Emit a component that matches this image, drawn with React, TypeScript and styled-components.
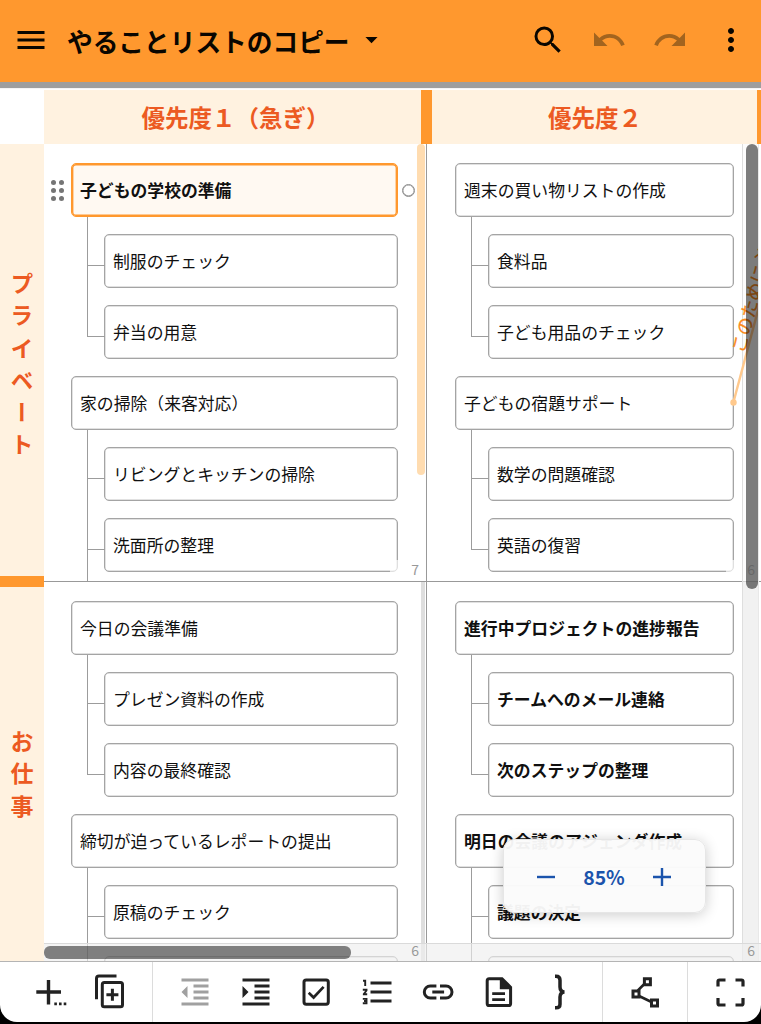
import React from "react";
import styled, { createGlobalStyle, css } from "styled-components";
import {
  MdMenu,
  MdArrowDropDown,
  MdSearch,
  MdUndo,
  MdRedo,
  MdMoreVert,
  MdFormatIndentDecrease,
  MdFormatIndentIncrease,
} from "react-icons/md";

const GlobalStyle = createGlobalStyle`
  * { box-sizing: border-box; }
  body {
    margin: 0;
    background: #000;
    font-family: "Noto Sans CJK JP", "Noto Sans", sans-serif;
  }
`;

const Screen = styled.div`
  width: 761px;
  height: 1024px;
  display: flex;
  flex-direction: column;
  overflow: hidden;
  background: #000;
`;

const AppBar = styled.header`
  flex: none;
  height: 82px;
  display: flex;
  align-items: center;
  padding: 0 12px 0 12.5px;
  background: #ff982e;
  color: #0a0600;
`;

const BarButton = styled.button<{ $gap?: number; $dim?: boolean; $size?: number }>`
  flex: none;
  width: ${(p) => p.$size ?? 36}px;
  height: ${(p) => p.$size ?? 36}px;
  margin: -3px 0 0 ${(p) => p.$gap ?? 0}px;
  padding: 0;
  border: 0;
  background: none;
  color: ${(p) => (p.$dim ? "#a2641f" : "#0a0600")};
  svg {
    display: block;
    width: 100%;
    height: 100%;
  }
`;

const Title = styled.h1`
  margin: 0 0 0 18.5px;
  flex: none;
  width: 289.5px;
  font-size: 25.7px;
  line-height: 36px;
  font-weight: 700;
  white-space: nowrap;
`;

const Spacer = styled.div`
  flex: 1;
`;

const Strip = styled.div`
  flex: none;
  height: 8px;
  border-top: 6px solid #9e9e9e;
  background: #f4f4f4;
  border-bottom: 1px solid #fff;
`;

const HeadRow = styled.div`
  flex: none;
  height: 54px;
  display: flex;
  background: #fff;
`;

const Corner = styled.div`
  width: 44px;
`;

const ColumnHead = styled.div<{ $w: number; $shift?: number }>`
  width: ${(p) => p.$w}px;
  padding-left: ${(p) => p.$shift ?? 0}px;
  display: flex;
  align-items: center;
  justify-content: center;
  background: #fff2e0;
  color: #ec5a22;
  font-size: 23.5px;
  font-weight: 700;
  line-height: 54px;
  white-space: nowrap;
`;

const ColumnBar = styled.div<{ $w: number }>`
  width: ${(p) => p.$w}px;
  background: #ff982e;
`;

const Board = styled.div`
  flex: none;
  height: 817px;
  display: flex;
  background: #fff;
`;

const RowLabels = styled.div`
  flex: none;
  width: 44px;
  display: flex;
  flex-direction: column;
`;

const RowLabel = styled.div<{ $h: number; $top: number }>`
  height: ${(p) => p.$h}px;
  padding-top: ${(p) => p.$top}px;
  background: #fff2e0;
  color: #ec5a22;
  font-size: 23px;
  font-weight: 700;
  line-height: 44px;
  letter-spacing: 9.2px;
  writing-mode: vertical-rl;
`;

const RowBar = styled.div`
  height: 11px;
  background: #ff982e;
`;

const Canvas = styled.main`
  position: relative;
  flex: 1;
  overflow: hidden;
  display: grid;
  grid-template-columns: 383px 334px;
  grid-template-rows: 438px 379px;
`;

const Cell = styled.section<{ $second?: boolean; $last?: boolean }>`
  position: relative;
  overflow: hidden;
  padding: 19px 0 0 ${(p) => (p.$second ? 28 : 27)}px;
  display: flex;
  flex-direction: column;
  gap: 17px;
  border-right: ${(p) => (p.$second ? "0" : "1px solid #999")};
  border-bottom: ${(p) => (p.$last ? "0" : "1px solid #999")};
`;

const Group = styled.div<{ $w: number }>`
  flex: none;
  width: ${(p) => p.$w}px;
  display: flex;
  flex-direction: column;
  gap: 17px;
`;

const Card = styled.div<{ $bold?: boolean; $active?: boolean }>`
  height: 54px;
  flex: none;
  padding: 0 0 1px 8px;
  display: flex;
  align-items: center;
  border: 1px solid #a4a4a4;
  border-radius: 5px;
  box-shadow: inset 0 0 0 0.5px #c4c4c4;
  background: #fff;
  color: #101010;
  font-size: 16.84px;
  line-height: 24px;
  font-weight: ${(p) => (p.$bold ? 700 : 400)};
  white-space: nowrap;
  ${(p) =>
    p.$active &&
    css`
      border-color: #ff982e;
      box-shadow: inset 0 0 0 1.4px #ff982e;
      background: #fff9f2;
    `}
`;

const ChildCard = styled(Card)<{ $first?: boolean }>`
  position: relative;
  margin-left: 33px;
  &::before {
    content: "";
    position: absolute;
    left: -18px;
    top: ${(p) => (p.$first ? -18 : -42)}px;
    width: 17px;
    height: ${(p) => (p.$first ? 48 : 72)}px;
    border-left: 1px solid #9c9c9c;
    border-bottom: 1px solid #9c9c9c;
  }
`;

const Count = styled.span<{ $x: number; $y: number; $w?: number; $clear?: boolean }>`
  position: absolute;
  left: ${(p) => p.$x}px;
  top: ${(p) => p.$y}px;
  width: ${(p) => p.$w ?? 30}px;
  height: 20px;
  padding-right: 6px;
  text-align: right;
  color: #999;
  background: ${(p) => (p.$clear ? "none" : "rgba(255, 255, 255, 0.65)")};
  font-size: 14px;
  line-height: 18px;
`;

const Scroll = styled.div<{
  $x: number;
  $y: number;
  $w: number;
  $h: number;
  $c: string;
  $r?: number;
}>`
  position: absolute;
  left: ${(p) => p.$x}px;
  top: ${(p) => p.$y}px;
  width: ${(p) => p.$w}px;
  height: ${(p) => p.$h}px;
  border-radius: ${(p) => p.$r ?? 0}px;
  background: ${(p) => p.$c};
`;

const TrackV = styled(Scroll)`
  border-left: 1px solid #dedede;
  border-right: 1px solid #e8e8e8;
`;

const TrackH = styled(Scroll)`
  border-top: 1px solid #dadada;
`;

const Handle = styled.div`
  position: absolute;
  left: 7px;
  top: 35.5px;
  display: grid;
  grid-template-columns: 5px 5px;
  gap: 3px;
  i {
    width: 5px;
    height: 5px;
    border-radius: 50%;
    background: #757575;
  }
`;

const Knob = styled.div`
  position: absolute;
  left: 357.5px;
  top: 39.5px;
  width: 13px;
  height: 13px;
  border: 1.5px solid #8c8c8c;
  box-shadow: inset 0 0 0 0.4px #8c8c8c;
  border-radius: 50%;
  background: #fff;
`;

const Relation = styled.svg`
  position: absolute;
  left: 677px;
  top: 96px;
  width: 37px;
  height: 170px;
`;

const ZoomBox = styled.div`
  position: absolute;
  left: 459px;
  top: 695px;
  width: 203px;
  height: 74px;
  padding: 1px 34px 0 33px;
  display: flex;
  align-items: center;
  justify-content: space-between;
  border: 1px solid #e6e6e6;
  border-radius: 11px;
  background: rgba(251, 251, 251, 0.96);
  box-shadow: 0 2px 14px rgba(0, 0, 0, 0.2);
  color: #1b54ac;
  font-size: 19.4px;
  font-weight: 700;
  svg {
    width: 18px;
    height: 18px;
    display: block;
  }
`;

const ToolBar = styled.footer`
  flex: none;
  height: 61px;
  display: flex;
  border-top: 1px solid #b4b4b4;
  border-radius: 0 0 17px 17px;
  background: #fff;
`;

const ToolGroup = styled.div<{ $w: number; $divided?: boolean }>`
  width: ${(p) => p.$w}px;
  display: flex;
  align-items: center;
  border-left: ${(p) => (p.$divided ? "1px solid #dcdcdc" : "0")};
`;

const Tool = styled.button<{ $gap: number; $dim?: boolean }>`
  flex: none;
  width: 36px;
  height: 36px;
  margin-left: ${(p) => p.$gap}px;
  padding: 0;
  border: 0;
  background: none;
  color: ${(p) => (p.$dim ? "#a0a0a0" : "#222")};
  svg {
    display: block;
    width: 36px;
    height: 36px;
    overflow: visible;
  }
`;

type GroupData = { title: string; active?: boolean; items: string[] };

const cells: { second?: boolean; last?: boolean; bold?: boolean; groups: GroupData[] }[] = [
  {
    groups: [
      { title: "子どもの学校の準備", active: true, items: ["制服のチェック", "弁当の用意"] },
      { title: "家の掃除（来客対応）", items: ["リビングとキッチンの掃除", "洗面所の整理", ""] },
    ],
  },
  {
    second: true,
    groups: [
      { title: "週末の買い物リストの作成", items: ["食料品", "子ども用品のチェック"] },
      { title: "子どもの宿題サポート", items: ["数学の問題確認", "英語の復習"] },
    ],
  },
  {
    last: true,
    groups: [
      { title: "今日の会議準備", items: ["プレゼン資料の作成", "内容の最終確認"] },
      { title: "締切が迫っているレポートの提出", items: ["原稿のチェック", ""] },
    ],
  },
  {
    second: true,
    last: true,
    bold: true,
    groups: [
      { title: "進行中プロジェクトの進捗報告", items: ["チームへのメール連絡", "次のステップの整理"] },
      { title: "明日の会議のアジェンダ作成", items: ["議題の決定", ""] },
    ],
  },
];

const line = { fill: "none", stroke: "currentColor", strokeWidth: 3 } as const;

const AddIcon = () => (
  <svg viewBox="0 0 36 36">
    <path {...line} strokeWidth={3.4} d="M18.5 6v24.5M6.3 18H31" />
    <path fill="currentColor" d="M24.3 28.6h2.6v2.6h-2.6zM29 28.6h2.6v2.6H29zM33.7 28.6h2.6v2.6h-2.6z" />
  </svg>
);

const CopyAddIcon = () => (
  <svg viewBox="0 0 36 36">
    <path {...line} d="M4.5 25.3V4.5Q4.5 2.1 7 2.1H24.5" />
    <rect {...line} x="10.3" y="8.5" width="20.2" height="24.3" rx="2" />
    <path {...line} d="M20.4 14.7v12M14.4 20.7h12" />
  </svg>
);

const CheckIcon = () => (
  <svg viewBox="0 0 36 36">
    <rect {...line} x="6" y="5.9" width="24.3" height="24.3" rx="2.2" />
    <path {...line} strokeWidth={2.7} d="M10.7 18.8l4.9 4.7 10-10.6" />
  </svg>
);

const NumberedIcon = () => (
  <svg viewBox="0 0 36 36">
    <path {...line} d="M11.5 9H32.5M11.5 18H32.5M11.5 27H32.5" />
    <path {...line} strokeWidth={1.9} d="M4 6.8h2.2V12M3.8 15.8h3.7v.7L4.8 20v.3h3.4M3.8 24.9h3.7v4.3H3.8M5 27h2.5" />
  </svg>
);

const LinkIcon = () => (
  <svg viewBox="0 0 36 36">
    <path {...line} d="M16.4 12H10.3a5.9 5.9 0 0 0 0 12h6.1M20 12h6a5.9 5.9 0 0 1 0 12h-6M12.3 18h11.8" />
  </svg>
);

const NoteIcon = () => (
  <svg viewBox="0 0 36 36">
    <path {...line} d="M8.2 4.7H21L29.6 13.3V29.4Q29.6 31.5 27.5 31.5H8.3Q6.2 31.5 6.2 29.4V6.8Q6.2 4.7 8.2 4.7Z" />
    <path fill="currentColor" d="M18.8 4.7h2.7l8.2 8.2v2.3H18.8z" />
    <path {...line} strokeWidth={2.8} d="M11.2 19.6H24M11.2 25.7H24" />
  </svg>
);

const BraceIcon = () => (
  <svg viewBox="0 0 36 36">
    <path
      {...line}
      strokeWidth={3.5}
      d="M13 2.2h1Q18 2.2 18 6.2V13Q18 17.400 22.300 18Q18 18.600 18 23V30.200Q18 33.800 14 33.800H13"
    />
  </svg>
);

const NodesIcon = () => (
  <svg viewBox="0 0 36 36">
    <path {...line} strokeWidth={2.5} d="M16.800 10.500L10.800 16.500M11 21.500L23.500 27.500" />
    <path {...line} d="M17.400 4.800h6v6h-6zM6 17h6v6H6zM24.500 26h6v6h-6z" />
  </svg>
);

const FullscreenIcon = () => (
  <svg viewBox="0 0 36 36">
    <path
      {...line}
      strokeWidth={3.2}
      d="M6 12.500V7.500Q6 6 7.500 6H13.500M23.500 6H29.500Q31 6 31 7.500V12.500M31 24V29.500Q31 31 29.500 31H23.500M13.500 31H7.500Q6 31 6 29.500V24"
    />
  </svg>
);

export default function App() {
  return (
    <>
      <GlobalStyle />
      <Screen>
        <AppBar>
          <BarButton><MdMenu /></BarButton>
          <Title>やることリストのコピー</Title>
          <BarButton $size={29}><MdArrowDropDown /></BarButton>
          <Spacer />
          <BarButton><MdSearch /></BarButton>
          <BarButton $dim $gap={25.5}><MdUndo /></BarButton>
          <BarButton $dim $gap={25}><MdRedo /></BarButton>
          <BarButton $gap={25}><MdMoreVert /></BarButton>
        </AppBar>
        <Strip />
        <HeadRow>
          <Corner />
          <ColumnHead $w={377} $shift={6}>優先度１（急ぎ）</ColumnHead>
          <ColumnBar $w={11} />
          <ColumnHead $w={325} $shift={1}>優先度２</ColumnHead>
          <ColumnBar $w={4} />
        </HeadRow>
        <Board>
          <RowLabels>
            <RowLabel $h={432} $top={128}>プライベート</RowLabel>
            <RowBar />
            <RowLabel $h={374} $top={143}>お仕事</RowLabel>
          </RowLabels>
          <Canvas>
            {cells.map((cell, i) => (
              <Cell key={i} $second={cell.second} $last={cell.last}>
                {cell.groups.map((g) => (
                  <Group key={g.title} $w={cell.second ? 279 : 327}>
                    <Card $bold={cell.bold || g.active} $active={g.active}>{g.title}</Card>
                    {g.items.map((t, k) => (
                      <ChildCard key={k} $first={k === 0} $bold={cell.bold}>{t}</ChildCard>
                    ))}
                  </Group>
                ))}
              </Cell>
            ))}
            <Handle><i /><i /><i /><i /><i /><i /></Handle>
            <Knob />
            <Scroll $x={373} $y={0} $w={8} $h={331} $r={4} $c="#ffdcb0" />
            <Scroll $x={377} $y={438} $w={4} $h={379} $c="#dedede" />
            <Count $x={346} $y={416} $w={35}>7</Count>
            <Count $x={682} $y={416} $w={35}>6</Count>
            <TrackV $x={698} $y={0} $w={17} $h={438} $c="rgba(250,250,250,.6)" />
            <TrackV $x={698} $y={438} $w={17} $h={379} $c="#f1f1f1" />
            <TrackH $x={0} $y={799} $w={717} $h={18} $c="rgba(238,238,238,.65)" />
            <Count $clear $x={351} $y={797}>6</Count>
            <Count $clear $x={687} $y={797}>6</Count>
            <Relation viewBox="721 240 37 170">
              <path d="M733.5 402L761 299" stroke="#ffc98d" strokeWidth="2.4" fill="none" />
              <circle cx="733.5" cy="402.500" r="3.2" fill="#ffc98d" />
              <text
                transform="translate(744.300 354) rotate(-75)"
                fill="#fb8c1e"
                stroke="#fb8c1e"
                strokeWidth="0.3"
                fontSize="18"
                fontFamily="Noto Sans CJK JP, sans-serif"
              >
                このために必
              </text>
            </Relation>
            <Scroll $x={702} $y={0} $w={12} $h={445} $r={6} $c="rgba(0,0,0,.51)" />
            <Scroll $x={0} $y={802} $w={307} $h={12.5} $r={6} $c="rgba(0,0,0,.48)" />
            <ZoomBox>
              <svg viewBox="0 0 18 18"><path d="M0 9h18" stroke="currentColor" strokeWidth="2.4" /></svg>
              <span>85%</span>
              <svg viewBox="0 0 18 18"><path d="M0 9h18M9 0v18" stroke="currentColor" strokeWidth="2.4" /></svg>
            </ZoomBox>
          </Canvas>
        </Board>
        <ToolBar>
          <ToolGroup $w={152}>
            <Tool $gap={30}><AddIcon /></Tool>
            <Tool $gap={26}><CopyAddIcon /></Tool>
          </ToolGroup>
          <ToolGroup $w={450} $divided>
            <Tool $gap={24} $dim><MdFormatIndentDecrease /></Tool>
            <Tool $gap={24.5}><MdFormatIndentIncrease /></Tool>
            <Tool $gap={24.5}><CheckIcon /></Tool>
            <Tool $gap={24.5}><NumberedIcon /></Tool>
            <Tool $gap={25.5}><LinkIcon /></Tool>
            <Tool $gap={25}><NoteIcon /></Tool>
            <Tool $gap={25}><BraceIcon /></Tool>
          </ToolGroup>
          <ToolGroup $w={85} $divided>
            <Tool $gap={24}><NodesIcon /></Tool>
          </ToolGroup>
          <ToolGroup $w={74} $divided>
            <Tool $gap={24}><FullscreenIcon /></Tool>
          </ToolGroup>
        </ToolBar>
      </Screen>
    </>
  );
}
